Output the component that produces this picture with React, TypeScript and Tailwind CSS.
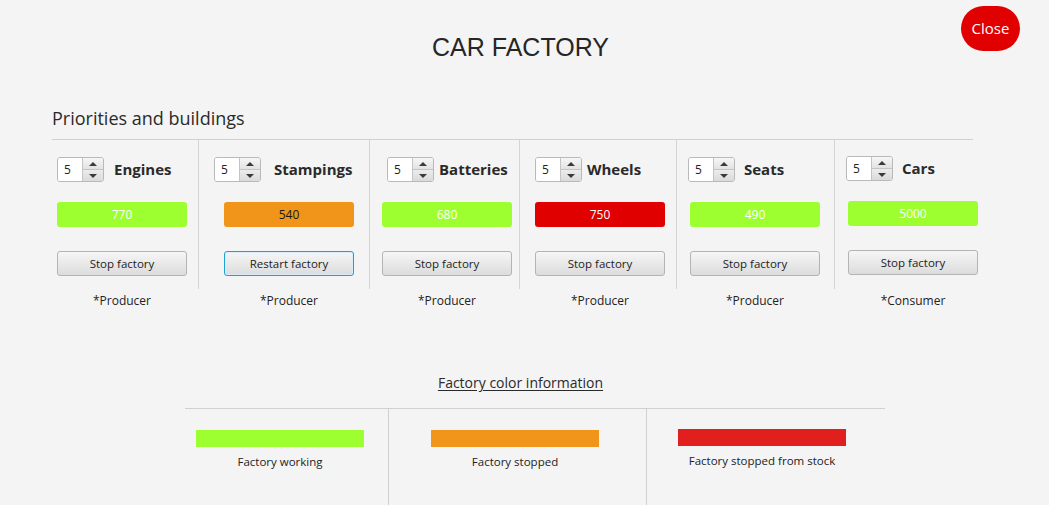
import React from "react";

const GREEN = "bg-[#9dff2f]";

type Factory = {
  name: string;
  value: string;
  bar: string;
  valueText: string;
  button: string;
  focused?: boolean;
  role: string;
  width: string;
  spinPad: string;
  nameGap: string;
  barPad: string;
  top: string;
  last?: boolean;
};

const factories: Factory[] = [
  { name: "Engines", value: "770", bar: GREEN, valueText: "text-white", button: "Stop factory", role: "*Producer", width: "w-[147px]", spinPad: "pl-[5px]", nameGap: "gap-[10px]", barPad: "pl-[5px]", top: "pt-[17px]" },
  { name: "Stampings", value: "540", bar: "bg-[#f0951a]", valueText: "text-[#1a1a1a]", button: "Restart factory", focused: true, role: "*Producer", width: "w-[171px]", spinPad: "pl-[15px]", nameGap: "gap-[13px]", barPad: "pl-[25px]", top: "pt-[17px]" },
  { name: "Batteries", value: "680", bar: GREEN, valueText: "text-white", button: "Stop factory", role: "*Producer", width: "w-[150px]", spinPad: "pl-[17px]", nameGap: "gap-[5px]", barPad: "pl-[12px]", top: "pt-[17px]" },
  { name: "Wheels", value: "750", bar: "bg-[#e00000]", valueText: "text-white", button: "Stop factory", role: "*Producer", width: "w-[157px]", spinPad: "pl-[15px]", nameGap: "gap-[5px]", barPad: "pl-[15px]", top: "pt-[17px]" },
  { name: "Seats", value: "490", bar: GREEN, valueText: "text-white", button: "Stop factory", role: "*Producer", width: "w-[158px]", spinPad: "pl-[11px]", nameGap: "gap-[9px]", barPad: "pl-[13px]", top: "pt-[17px]" },
  { name: "Cars", value: "5000", bar: GREEN, valueText: "text-white", button: "Stop factory", role: "*Consumer", width: "w-[139px]", spinPad: "pl-[11px]", nameGap: "gap-[9px]", barPad: "pl-[13px]", top: "pt-[16px]", last: true },
];

const Spinner = () => (
  <div className="flex h-[25px] w-[47px] rounded-[3px] border border-[#b9b9b9] overflow-hidden">
    <div className="w-[24px] bg-white text-[12px] leading-[23px] pl-[6px] text-[#222]">5</div>
    <div className="flex-1 flex flex-col border-l border-[#c4c4c4]">
      <div className="flex-1 flex items-center justify-center bg-gradient-to-b from-[#f6f6f6] to-[#e2e2e2] border-b border-[#c4c4c4]">
        <div className="w-0 h-0 border-l-[4px] border-r-[4px] border-b-[4px] border-l-transparent border-r-transparent border-b-[#3a3a3a]" />
      </div>
      <div className="flex-1 flex items-center justify-center bg-gradient-to-b from-[#ececec] to-[#dadada]">
        <div className="w-0 h-0 border-l-[4px] border-r-[4px] border-t-[4px] border-l-transparent border-r-transparent border-t-[#3a3a3a]" />
      </div>
    </div>
  </div>
);

const FactoryColumn = ({ f }: { f: Factory }) => (
  <div className={`${f.width} shrink-0 flex flex-col`}>
    <div className={`${f.top} h-[149px] ${f.last ? "" : "border-r border-[#d4d4d4]"}`}>
      <div className={`flex items-center ${f.spinPad} ${f.nameGap}`}>
        <Spinner />
        <span className="text-[15px] font-bold text-[#2a2a2a]">{f.name}</span>
      </div>
      <div className={`${f.barPad} mt-[20px]`}>
        <div className={`w-[130px] h-[25px] rounded-[3px] ${f.bar} ${f.valueText} text-[12px] leading-[25px] text-center`}>
          {f.value}
        </div>
      </div>
      <div className={`${f.barPad} mt-[23px]`}>
        <button
          className={`w-[130px] h-[25px] rounded-[3px] border text-[11.5px] text-[#222] bg-gradient-to-b from-[#f6f6f6] to-[#dcdcdc] ${
            f.focused
              ? "border-[#1ea0d6] shadow-[inset_0_0_0_1px_#d8eef8]"
              : "border-[#b4b4b4]"
          }`}
        >
          {f.button}
        </button>
      </div>
    </div>
    <div className={f.barPad}>
      <div className="w-[130px] text-center text-[12px] leading-[24px] text-[#222]">{f.role}</div>
    </div>
  </div>
);

const legend = [
  { label: "Factory working", color: "bg-[#9dff2f]", width: "w-[204px]", pad: "pl-[11px]", top: "pt-[21px]" },
  { label: "Factory stopped", color: "bg-[#f0951a]", width: "w-[258px]", pad: "pl-[42px]", top: "pt-[21px]" },
  { label: "Factory stopped from stock", color: "bg-[#e21f1f]", width: "w-[238px]", pad: "pl-[31px]", top: "pt-[20px]" },
];

export default function App() {
  return (
    <div
      className="relative w-[1049px] h-[505px] overflow-hidden bg-[#f4f4f4] text-[#222]"
      style={{ fontFamily: '"Open Sans", "Noto Sans", sans-serif' }}
    >
      <button className="absolute left-[961px] top-[6px] w-[59px] h-[45px] rounded-full bg-[#e00000] text-white text-[15px]">
        Close
      </button>

      <div className="pt-[33px] w-[1041px] text-center">
        <h1
          className="text-[25px] leading-[29px] text-[#262626]"
          style={{ fontFamily: '"Liberation Sans", Arial, sans-serif' }}
        >
          CAR FACTORY
        </h1>
      </div>

      <div className="pl-[52px] mt-[44px]">
        <div className="text-[18px] leading-[25px] text-[#2a2a2a]">Priorities and buildings</div>
        <div className="w-[921px] mt-[8px] border-t border-[#d0d0d0] flex">
          {factories.map((f) => (
            <FactoryColumn key={f.name} f={f} />
          ))}
        </div>
      </div>

      <div className="mt-[57px]">
        <div className="w-[1041px] text-center">
          <span className="text-[14px] leading-[20px] underline underline-offset-2 text-[#2a2a2a]">
            Factory color information
          </span>
        </div>
        <div className="ml-[185px] w-[700px] mt-[14px] border-t border-[#d0d0d0] flex h-[110px]">
          {legend.map((l, i) => (
            <div
              key={l.label}
              className={`${l.width} ${l.pad} ${l.top} ${i < legend.length - 1 ? "border-r border-[#d0d0d0]" : ""}`}
            >
              <div className={`w-[168px] h-[17px] ${l.color}`} />
              <div className="w-[168px] text-center text-[11.5px] leading-[16px] mt-[7px] text-[#222]">
                {l.label}
              </div>
            </div>
          ))}
        </div>
      </div>
    </div>
  );
}
